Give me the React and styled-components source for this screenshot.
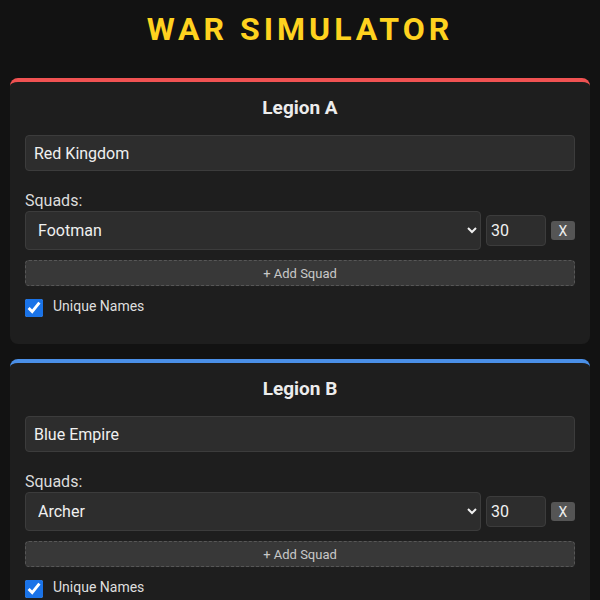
import React, { useState } from 'react';
import styled, { createGlobalStyle } from 'styled-components';

const GlobalStyle = createGlobalStyle`
  body {
    margin: 0;
    padding: 0 10px;
    background: #121212;
    color: #e0e0e0;
    font-family: Roboto, "Liberation Sans", sans-serif;
  }
  * { box-sizing: border-box; }
`;

const legions = [
  { id: 'a', title: 'Legion A', name: 'Red Kingdom', accent: '#f05252', unit: 'Footman' },
  { id: 'b', title: 'Legion B', name: 'Blue Empire', accent: '#4a8fe7', unit: 'Archer' }
];

const units = ['Footman', 'Archer', 'Knight', 'Cavalry'];

const LegionCard = ({ legion }) => {
  const [name, setName] = useState(legion.name);
  const [unit, setUnit] = useState(legion.unit);
  const [count, setCount] = useState(30);
  const [unique, setUnique] = useState(true);
  return (
    <Card accent={legion.accent}>
      <CardTitle>{legion.title}</CardTitle>
      <TextInput value={name} onChange={e => setName(e.target.value)} />
      <Label>Squads:</Label>
      <SquadRow>
        <Select value={unit} onChange={e => setUnit(e.target.value)}>
          {units.map(u => (
            <option key={u}>{u}</option>
          ))}
        </Select>
        <NumberInput
          type="number"
          value={count}
          onChange={e => setCount(e.target.value)}
        />
        <RemoveButton>X</RemoveButton>
      </SquadRow>
      <AddButton>+ Add Squad</AddButton>
      <CheckRow>
        <Checkbox
          type="checkbox"
          checked={unique}
          onChange={e => setUnique(e.target.checked)}
        />
        <span>Unique Names</span>
      </CheckRow>
    </Card>
  );
};

const App = () => (
  <>
    <GlobalStyle />
    <Title>WAR SIMULATOR</Title>
    <Stack>
      {legions.map(l => (
        <LegionCard key={l.id} legion={l} />
      ))}
    </Stack>
  </>
);

const Title = styled.h1`
  margin: 10px 0 30px;
  line-height: 38px;
  font-size: 32px;
  font-weight: 700;
  letter-spacing: 4px;
  text-align: center;
  color: #ffd21f;
`;

const Stack = styled.div`
  display: flex;
  flex-direction: column;
  gap: 15px;
`;

const Card = styled.section`
  background: #1e1e1e;
  border-top: 4px solid ${({ accent }) => accent};
  border-radius: 8px;
  padding: 15px 15px 27px;
`;

const CardTitle = styled.h2`
  margin: 0 0 16px;
  font-size: 19px;
  line-height: 22px;
  font-weight: 700;
  text-align: center;
  color: #ececec;
`;

const TextInput = styled.input`
  display: block;
  width: 100%;
  height: 36px;
  margin-bottom: 20px;
  padding: 0 8px;
  background: #2d2d2d;
  border: 1px solid #3c3c3c;
  border-radius: 4px;
  color: #f0f0f0;
  font: 16px Roboto, "Liberation Sans", sans-serif;
  outline: none;
`;

const Label = styled.label`
  display: block;
  font-size: 16px;
  line-height: 20px;
  color: #dcdcdc;
`;

const SquadRow = styled.div`
  display: flex;
  align-items: center;
  gap: 5px;
  margin-bottom: 10px;
`;

const Select = styled.select`
  flex: 1;
  height: 39px;
  padding: 0 8px;
  background: #2d2d2d;
  border: 1px solid #3c3c3c;
  border-radius: 4px;
  color: #f0f0f0;
  color-scheme: dark;
  font: 16px Roboto, "Liberation Sans", sans-serif;
  outline: none;
`;

const NumberInput = styled.input`
  width: 60px;
  height: 31px;
  padding: 0 4px;
  background: #2d2d2d;
  border: 1px solid #3c3c3c;
  border-radius: 4px;
  color: #f0f0f0;
  font: 16px Roboto, "Liberation Sans", sans-serif;
  outline: none;
  -moz-appearance: textfield;
  &::-webkit-inner-spin-button,
  &::-webkit-outer-spin-button {
    -webkit-appearance: none;
    margin: 0;
  }
`;

const RemoveButton = styled.button`
  width: 24px;
  height: 19px;
  padding: 0;
  border: none;
  border-radius: 3px;
  background: #555;
  color: #eee;
  font: 14px Roboto, "Liberation Sans", sans-serif;
  cursor: pointer;
`;

const AddButton = styled.button`
  display: block;
  width: 100%;
  height: 26px;
  background: #383838;
  border: 1px dashed #575757;
  border-radius: 4px;
  color: #c8c8c8;
  font: 13px Roboto, "Liberation Sans", sans-serif;
  cursor: pointer;
`;

const CheckRow = styled.label`
  display: flex;
  align-items: flex-start;
  gap: 10px;
  margin-top: 13px;
  font-size: 14px;
  line-height: 14px;
  color: #dedede;
`;

const Checkbox = styled.input`
  width: 18px;
  height: 18px;
  margin: 0;
  accent-color: #1a73e8;
`;

export default App;
